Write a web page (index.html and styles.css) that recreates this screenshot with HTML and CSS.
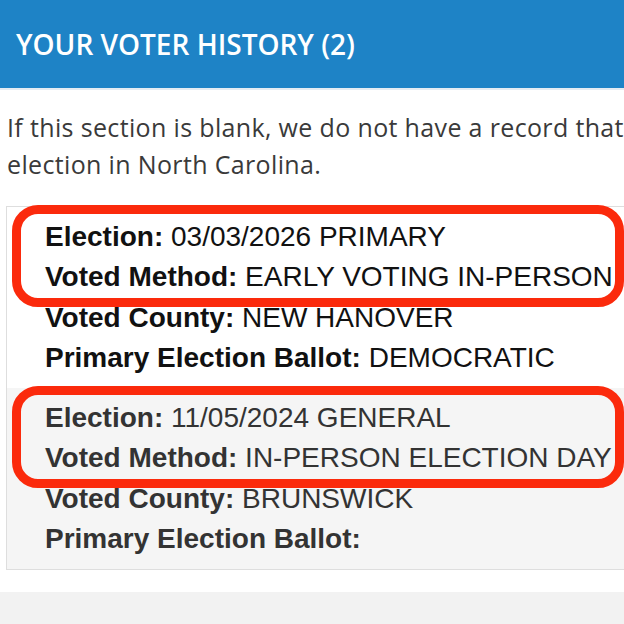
FILE: index.html
```html
<!DOCTYPE html>
<html lang="en">
<head>
<meta charset="utf-8">
<title>Your Voter History</title>
<link rel="stylesheet" href="styles.css">
</head>
<body>
<div class="page">
  <header class="panel-header">
    <h2 class="panel-title">YOUR VOTER HISTORY (2)</h2>
  </header>
  <p class="intro">If this section is blank, we do not have a record that you voted in an<br>election in North Carolina.</p>
  <div class="history">
    <div class="record">
      <div class="highlight">
        <div class="line"><b>Election:</b> 03/03/2026 PRIMARY</div>
        <div class="line"><b>Voted Method:</b> EARLY VOTING IN-PERSON</div>
      </div>
      <div class="line"><b>Voted County:</b> NEW HANOVER</div>
      <div class="line"><b>Primary Election Ballot:</b> DEMOCRATIC</div>
    </div>
    <div class="record alt">
      <div class="highlight">
        <div class="line"><b>Election:</b> 11/05/2024 GENERAL</div>
        <div class="line"><b>Voted Method:</b> IN-PERSON ELECTION DAY</div>
      </div>
      <div class="line"><b>Voted County:</b> BRUNSWICK</div>
      <div class="line"><b>Primary Election Ballot:</b></div>
    </div>
  </div>
  <div class="next-panel"></div>
</div>
</body>
</html>
```
FILE: styles.css
```css
html, body {
  margin: 0;
  padding: 0;
  background: #ffffff;
}

.page {
  width: 624px;
  height: 624px;
  overflow: hidden;
}

.panel-header {
  height: 88px;
  background: #1e83c6;
  border-bottom: 2px solid #e4ecf3;
  display: flex;
  align-items: center;
  padding-left: 16px;
}

.panel-title {
  margin: 0;
  font-family: "Open Sans", "Liberation Sans", sans-serif;
  font-weight: 600;
  font-size: 28px;
  color: #ffffff;
  white-space: nowrap;
}

.intro {
  margin: 19px 0 0 0;
  padding: 0 7px;
  width: 820px;
  font-family: "Open Sans", "Liberation Sans", sans-serif;
  font-size: 25px;
  letter-spacing: 0.35px;
  line-height: 37px;
  color: #3a3a3a;
  white-space: nowrap;
}

.history {
  margin: 23px 0 0 6px;
  border: 1px solid #dedede;
  border-right: none;
}

.record {
  padding: 10px 0 10px 38px;
  font-family: "Liberation Sans", Arial, sans-serif;
  font-size: 28px;
  line-height: 40.3px;
  color: #111111;
  white-space: nowrap;
  background: #ffffff;
}

.record.alt {
  background: #f5f5f5;
  color: #333333;
}

.record b {
  font-weight: 700;
}

.highlight {
  position: relative;
}

.highlight::before {
  content: "";
  position: absolute;
  left: -33px;
  right: 0;
  top: -12px;
  bottom: -9px;
  border: 9px solid #fb2a0c;
  border-radius: 26px;
  pointer-events: none;
}

.next-panel {
  margin-top: 22px;
  height: 40px;
  background: #f2f2f2;
}
```
